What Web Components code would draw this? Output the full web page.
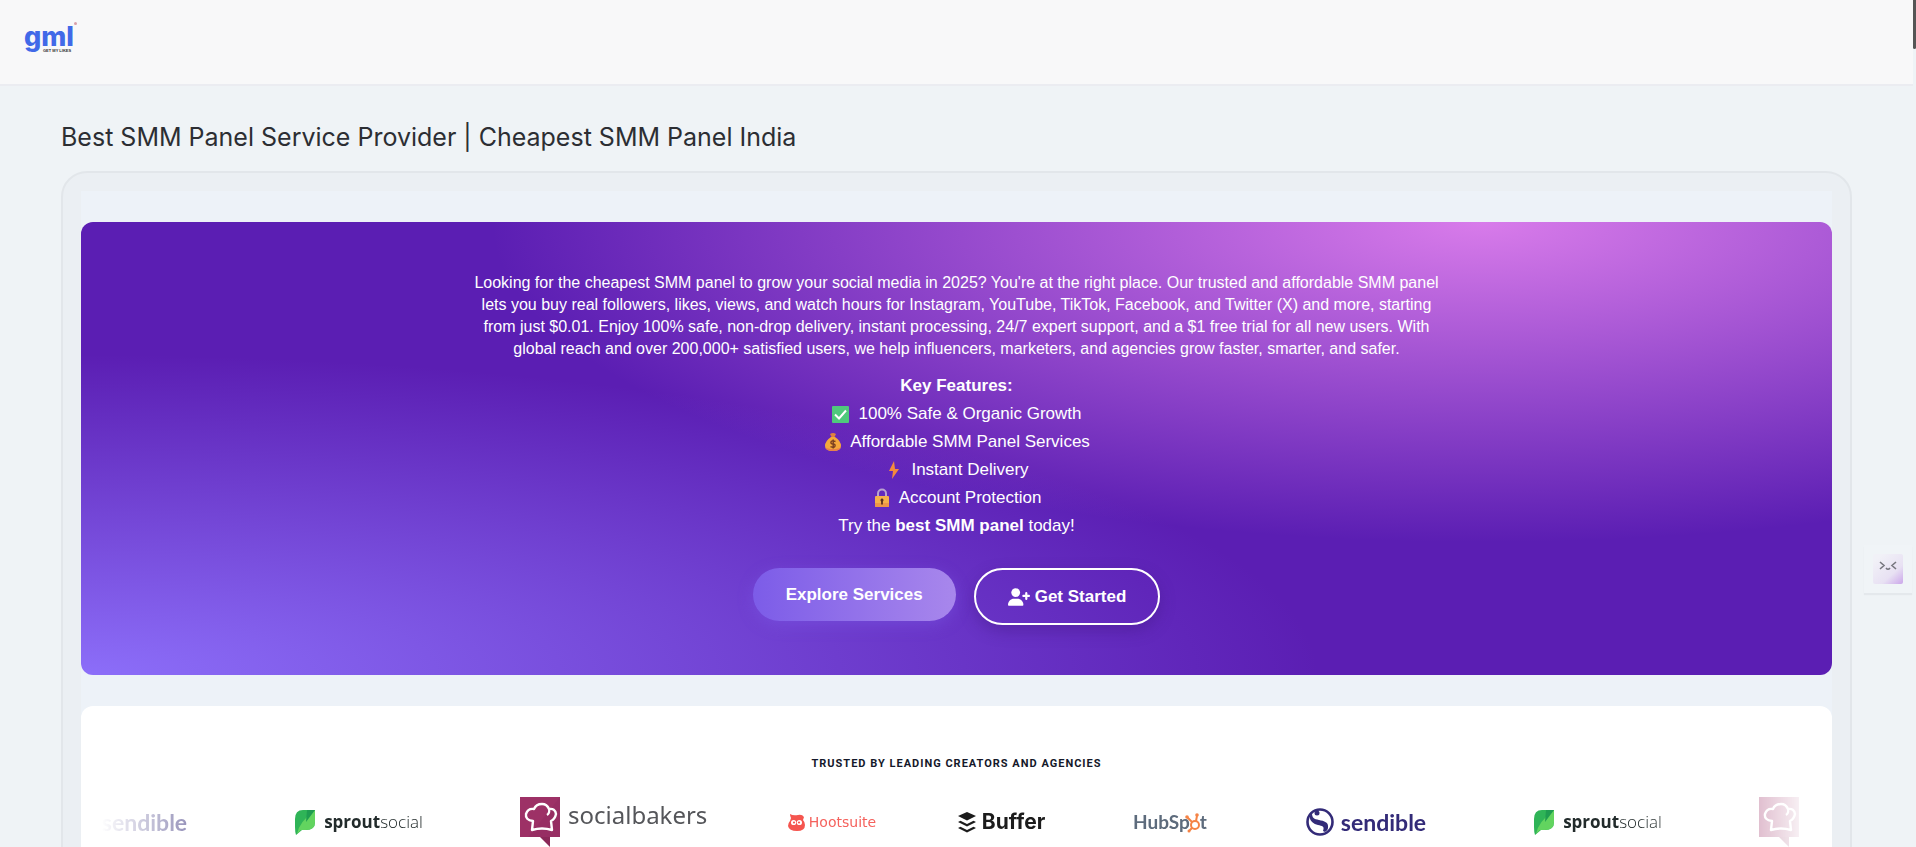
<!DOCTYPE html>
<html lang="en">
<head>
<meta charset="utf-8">
<title>Best SMM Panel Service Provider | Cheapest SMM Panel India</title>
<style>
  html {
    height: 100%;
    overflow: hidden;
  }

  body {
    height: 100%;
    margin: 0;
    overflow: hidden;
    background: #eff3f6;
    color: #2c2e33;
    font-family: "Liberation Sans", Arial, sans-serif;
  }
</style>
</head>
<body>
<panel-page></panel-page>

<script>
const define = (name, html) => {
  const template = document.createElement("template");
  template.innerHTML = html;
  customElements.define(
    name,
    class extends HTMLElement {
      constructor() {
        super();
        this.attachShadow({ mode: "open" });
        this.shadowRoot.appendChild(template.content.cloneNode(true));
      }
    }
  );
};

define(
  "site-logo",
  `
  <style>
    :host { display: block; }

    a {
      position: relative;
      display: inline-block;
      color: #4169e8;
      font: 800 27px/32px Inter, sans-serif;
      text-decoration: none;
    }

    small {
      position: absolute;
      left: 19px;
      top: 27px;
      color: #333;
      font: 700 4px/6px "Liberation Sans", sans-serif;
      white-space: nowrap;
    }

    i {
      position: absolute;
      right: -3px;
      top: 1px;
      width: 3px;
      height: 3px;
      border-radius: 50%;
      background: #d9a0a8;
    }
  </style>
  <a href="#">gml<small>GET MY LIKES</small><i></i></a>`
);

define(
  "site-header",
  `
  <style>
    :host {
      display: block;
      box-sizing: border-box;
      height: 86px;
      padding: 21px 24px;
      margin-right: 3px;
      background: #f8f8f9;
      border-bottom: 2px solid #ebecf1;
    }
  </style>
  <slot></slot>`
);

define(
  "feature-item",
  `
  <style>
    :host {
      display: flex;
      justify-content: center;
      align-items: center;
      gap: 7px;
    }

    ::slotted(svg) {
      width: 20px;
      height: 20px;
    }
  </style>
  <slot name="icon"></slot><span><slot></slot></span>`
);

define(
  "pill-button",
  `
  <style>
    :host { display: block; }

    button {
      display: flex;
      align-items: center;
      gap: 5px;
      padding: 16px 33px;
      border: 0;
      border-radius: 50px;
      background: linear-gradient(90deg, #7c5ce8, #a887ec);
      box-shadow: 0 4px 15px rgba(124, 92, 232, 0.4);
      color: #fff;
      font: 700 17px/21px "Liberation Sans", Arial, sans-serif;
    }

    :host([outline]) button {
      padding: 16px 32px;
      border: 2px solid #fff;
      background: none;
      box-shadow: 0 6px 15px rgba(60, 20, 120, 0.35);
    }

    ::slotted(svg) {
      width: 22px;
      height: 18px;
    }
  </style>
  <button type="button"><slot></slot></button>`
);

define(
  "hero-banner",
  `
  <style>
    :host {
      display: block;
      padding: 50px 20px;
      border-radius: 12px;
      background:
        radial-gradient(at 80% 0%, #d87bea 0, transparent 50%),
        radial-gradient(at 0% 100%, #8c6ef9 0, transparent 50%),
        #5b1eb3;
      color: #fff;
      text-align: center;
    }

    .intro {
      max-width: 970px;
      margin: 0 auto 12px;
      font-size: 16px;
      line-height: 22px;
    }

    .features {
      font-size: 17px;
      line-height: 28px;
    }

    .actions {
      display: flex;
      justify-content: center;
      align-items: flex-start;
      gap: 18px;
      margin-top: 28px;
    }
  </style>
  <div class="intro"><slot name="intro"></slot></div>
  <div class="features"><slot></slot></div>
  <div class="actions"><slot name="action"></slot></div>`
);

define(
  "brand-logo",
  `
  <style>
    :host {
      display: flex;
      flex: none;
      justify-content: center;
      align-items: center;
      height: 50px;
      white-space: nowrap;
    }

    ::slotted(svg) {
      flex: none;
    }

    ::slotted(b) {
      font-weight: 700;
    }

    :host([brand="sendible"]) {
      width: 146px;
      gap: 7px;
      color: #332b78;
      font: 700 23px/28px Lato, sans-serif;
    }

    :host([brand="sprout"]) {
      width: 158px;
      gap: 9px;
      color: #222b2b;
      font: 300 17px/24px "Open Sans", sans-serif;
    }

    :host([brand="socialbakers"]) {
      box-sizing: border-box;
      justify-content: flex-start;
      width: 190px;
      padding-left: 2px;
      gap: 8px;
      color: #55565a;
      font: 400 24px/36px "Noto Sans", sans-serif;
    }

    :host([brand="socialbakers"]) span {
      padding-bottom: 14px;
    }

    :host([brand="hootsuite"]) {
      width: 88px;
      gap: 4px;
      color: #f5625d;
      font: 400 14px/18px "DejaVu Sans", sans-serif;
    }

    :host([brand="buffer"]) {
      width: 91px;
      gap: 6px;
      color: #1c1c1c;
      font: 700 21px/26px Inter, sans-serif;
    }

    :host([brand="hubspot"]) {
      width: 86px;
      color: #5d6b7c;
      font: 700 19px/24px Lato, sans-serif;
    }
  </style>
  <slot name="mark"></slot><span><slot></slot></span>`
);

define(
  "trusted-brands",
  `
  <style>
    :host {
      display: block;
      padding: 49px 20px 60px;
      border-radius: 12px;
      background: #fff;
    }

    h2 {
      margin: 0 0 24px;
      color: #14182a;
      font: 700 11px/18px Roboto, Arial, sans-serif;
      letter-spacing: 1px;
      text-align: center;
      text-transform: uppercase;
    }

    .window {
      overflow: hidden;
      -webkit-mask-image: linear-gradient(90deg, transparent, #000 10%, #000 90%, transparent);
      mask-image: linear-gradient(90deg, transparent, #000 10%, #000 90%, transparent);
    }

    /* the strip is caught part way through its loop */
    .track {
      display: flex;
      gap: 80px;
      margin-left: -47px;
    }
  </style>
  <h2><slot name="title"></slot></h2>
  <div class="window"><div class="track"><slot></slot></div></div>`
);

define(
  "content-card",
  `
  <style>
    :host {
      display: block;
      margin: 0 64px 0 61px;
      padding: 18px;
      border: 2px solid #e2e6ea;
      border-radius: 26px;
      background: #ebeff3;
    }

    .inner {
      display: grid;
      grid-template-columns: minmax(0, 1fr);
      gap: 31px;
      padding-top: 31px;
      background: #edf2f8;
    }
  </style>
  <div class="inner"><slot></slot></div>`
);

define(
  "chat-launcher",
  `
  <style>
    :host {
      position: fixed;
      right: 4px;
      top: 545px;
      display: block;
    }

    button {
      display: grid;
      place-items: center;
      width: 48px;
      height: 48px;
      padding: 0;
      border: 0;
      background: #f0f4f7;
      box-shadow: 0 2px 1px rgba(90, 100, 120, 0.07);
    }
  </style>
  <button type="button" aria-label="Open chat">
    <svg width="30" height="30" viewBox="0 0 30 30">
      <defs>
        <linearGradient id="tile" x1="0.2" y1="0.1" x2="1" y2="1">
          <stop offset="0" stop-color="#f1f1f7"/>
          <stop offset="0.6" stop-color="#e8e1f3"/>
          <stop offset="1" stop-color="#cba6ea"/>
        </linearGradient>
      </defs>
      <rect width="30" height="30" rx="2" fill="url(#tile)"/>
      <g fill="none" stroke="#77777f" stroke-width="1.6">
        <path d="M7 8l4 3.500-4 3.500M23 8l-4 3.500 4 3.500M13 14q2 2.500 4 0"/>
      </g>
    </svg>
  </button>`
);

define(
  "scroll-thumb",
  `
  <style>
    :host {
      position: fixed;
      top: 0;
      right: 0;
      width: 3px;
      height: 49px;
      border-radius: 0 0 2px 2px;
      background: #555;
    }
  </style>`
);

const marks = {
  sendible: `
    <svg slot="mark" width="28" height="28" viewBox="0 0 28 28">
      <circle cx="14" cy="14" r="12.500" fill="#fff" stroke="#332b78" stroke-width="2.600"/>
      <path d="M6 5c0 5 2 6 7 7s10 2 9 8c0 2-2 3-3 4l-2-1c2-5-1-5-5-6S3 13 4 8z" fill="#332b78"/>
      <circle cx="11" cy="5" r="2.500" fill="#332b78"/>
    </svg>`,
  sprout: `
    <svg slot="mark" width="20" height="25" viewBox="0 0 20 25">
      <path d="M8 0h12v12q0 8-9 8H7l-6 5q-1-3-1-8V9q0-9 8-9z" fill="#2fb457"/>
      <path d="M20 0v12q0 8-9 8H6L2 24Q4 12 20 0z" fill="#62d45f"/>
      <path d="M12 0h8L11 12z" fill="#1f9c50"/>
    </svg>`,
  socialbakers: `
    <svg slot="mark" width="40" height="50" viewBox="0 0 40 50">
      <path d="M0 0h40v40H0z" fill="#9d3166"/>
      <path d="M40 0v40H8z" fill="#8f2a5f" opacity="0.4"/>
      <path d="M20 40h10v10z" fill="#8a2858"/>
      <path d="M12 33l1-9q-8-1-7-7 2-6 8-5 2-5 8-5 5 0 7 5 6-1 7 5-1 5-5 7l1 9q-10-3-20 0z" fill="none" stroke="#fff" stroke-width="2.400" stroke-linejoin="round"/>
      <path d="M27 18q3-2 2-6" fill="none" stroke="#fff" stroke-width="2.200"/>
    </svg>`,
  hootsuite: `
    <svg slot="mark" width="17" height="17" viewBox="0 0 17 17">
      <path d="M2 0q3 2 8 1 4-1 6 2l-1 3q2 2 2 5 0 6-8 6T0 12q0-3 2-5L3 4Q2 2 2 0z" fill="#f5554f"/>
      <g fill="#fff"><circle cx="5.600" cy="8.500" r="2.600"/><circle cx="11.400" cy="8.500" r="2.600"/></g>
      <g fill="#f5554f"><circle cx="6" cy="8.500" r="1.100"/><circle cx="11" cy="8.500" r="1.100"/></g>
    </svg>`,
  buffer: `
    <svg slot="mark" width="18" height="21" viewBox="0 0 18 21">
      <g fill="#1c1c1c">
        <path d="M9 0l9 4-9 4.500L0 4z"/>
        <path d="M0 10l2.500-1.200L9 12l6.500-3.200L18 10l-9 4.600z"/>
        <path d="M0 16l2.500-1.200L9 18l6.500-3.200L18 16l-9 4.600z"/>
      </g>
    </svg>`,
};

const sprocket = `<svg width="16" height="20" viewBox="0 0 16 20" style="margin: 0 -1px -4px -5px">
  <g fill="none" stroke="#f58345" stroke-width="2"><circle cx="10" cy="12" r="4"/><path d="M11 8l1-5M7 9L2 4M7 15l-3 3"/></g>
  <g fill="#f58345"><circle cx="12" cy="2" r="1.800"/><circle cx="2" cy="4" r="1.800"/><circle cx="4" cy="18" r="1.500"/></g>
</svg>`;

const names = {
  sendible: "sendible",
  sprout: "<b>sprout</b>social",
  socialbakers: "socialbakers",
  hootsuite: "Hootsuite",
  buffer: "Buffer",
  hubspot: `HubSp${sprocket}t`,
};

const order = [
  "sendible",
  "sprout",
  "socialbakers",
  "hootsuite",
  "buffer",
  "hubspot",
  "sendible",
  "sprout",
];

const brandStrip =
  order
    .map(
      (brand) =>
        `<brand-logo brand="${brand}">${marks[brand] || ""}${names[brand]}</brand-logo>`
    )
    .join("") +
  // only the mark fits before the strip fades out
  `<brand-logo brand="socialbakers">${marks.socialbakers}</brand-logo>`;

define(
  "panel-page",
  `
  <style>
    :host { display: block; }

    h1 {
      margin: 33px 61px 16px;
      font: 400 25px/36px Inter, sans-serif;
    }

    p { margin: 0; }
  </style>
  <site-header><site-logo></site-logo></site-header>
  <main>
    <h1>Best SMM Panel Service Provider | Cheapest SMM Panel India</h1>
    <content-card>
      <hero-banner>
        <p slot="intro">Looking for the cheapest SMM panel to grow your social media in 2025? You're at the right place. Our trusted and affordable SMM panel lets you buy real followers, likes, views, and watch hours for Instagram, YouTube, TikTok, Facebook, and Twitter (X) and more, starting from just $0.01. Enjoy 100% safe, non-drop delivery, instant processing, 24/7 expert support, and a $1 free trial for all new users. With global reach and over 200,000+ satisfied users, we help influencers, marketers, and agencies grow faster, smarter, and safer.</p>
        <p><b>Key Features:</b></p>
        <feature-item>
          <svg slot="icon" viewBox="0 0 20 20">
            <rect x="1" y="2" width="17" height="17" rx="1" fill="#4fc97c"/>
            <path d="M4 10.500l4 4 7-8" fill="none" stroke="#fff" stroke-width="2"/>
          </svg>
          100% Safe &amp; Organic Growth
        </feature-item>
        <feature-item>
          <svg slot="icon" viewBox="0 0 20 20">
            <path d="M7 2q3-2 6 0l-1.500 3h-3z" fill="#e0803f"/>
            <path d="M8 5h4q6 4 6 9 0 5-8 5t-8-5q0-5 6-9z" fill="#f5a83c"/>
            <path d="M2 15q2 2 8 2t8-2q-1 4-8 4t-8-4z" fill="#e8804a"/>
            <path d="M12.500 9.500q-4-1.500-4.500.5t2 2 2 2.200-4.500.5M10.200 7.500v9" fill="none" stroke="#7a3f20" stroke-width="1.400"/>
          </svg>
          Affordable SMM Panel Services
        </feature-item>
        <feature-item>
          <svg slot="icon" viewBox="0 0 20 20">
            <path d="M10 1L5 11h4l-1 8 7-10h-4z" fill="#f58a3c"/>
          </svg>
          Instant Delivery
        </feature-item>
        <feature-item>
          <svg slot="icon" viewBox="0 0 20 20">
            <path d="M6 9V5.500a4 4 0 0 1 8 0V9" fill="none" stroke="#b9a2cf" stroke-width="2"/>
            <rect x="3" y="8" width="14" height="11" rx="1" fill="#f5b04a"/>
            <path d="M3 15h14v3q0 1-1 1H4q-1 0-1-1z" fill="#ee9547"/>
            <path d="M10 10.500a1.700 1.700 0 0 1 .9 3V16.500H9.100V13.500a1.700 1.700 0 0 1 .9-3z" fill="#5a3020"/>
          </svg>
          Account Protection
        </feature-item>
        <p>Try the <b>best SMM panel</b> today!</p>
        <pill-button slot="action">Explore Services</pill-button>
        <pill-button slot="action" outline>
          <svg viewBox="0 0 640 512" fill="#fff">
            <circle cx="224" cy="128" r="128"/>
            <path d="M174 304h100c96 0 174 78 174 174 0 19-15 34-30 34H30c-15 0-30-15-30-34 0-96 78-174 174-174z"/>
            <path d="M500 312v-56h-56q-28-4-28-32t28-32h56v-56q4-28 32-28t32 28v56h48q28 4 28 32t-28 32h-48v56q-4 28-32 28t-32-28z"/>
          </svg>Get Started
        </pill-button>
      </hero-banner>
      <trusted-brands>
        <span slot="title">Trusted by leading creators and agencies</span>
        ${brandStrip}
      </trusted-brands>
    </content-card>
  </main>
  <chat-launcher></chat-launcher>
  <scroll-thumb></scroll-thumb>`
);
</script>
</body>
</html>
